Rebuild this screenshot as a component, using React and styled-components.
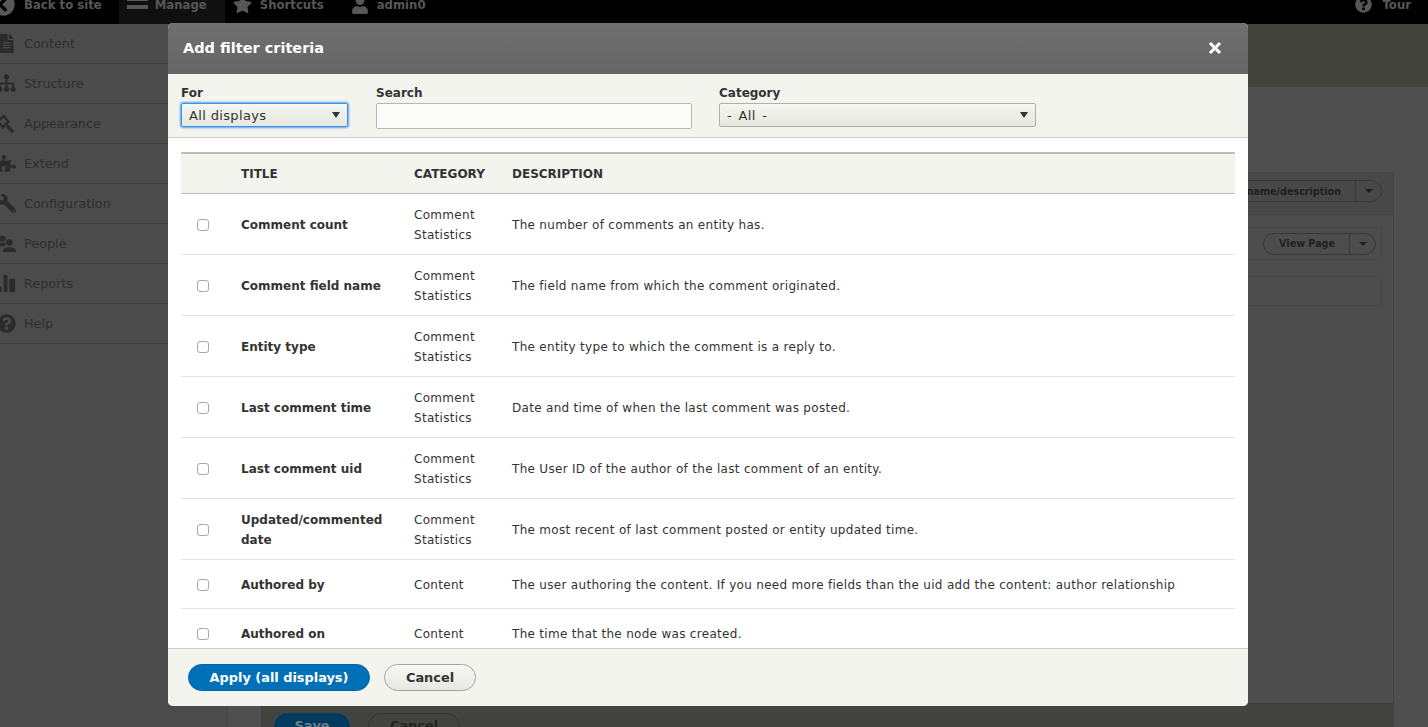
import React from "react";
import styled, { createGlobalStyle } from "styled-components";
import { FaFileAlt, FaPuzzlePiece, FaWrench, FaQuestionCircle, FaChevronCircleLeft, FaStar, FaUser } from "react-icons/fa";

const fontStack = `"DejaVu Sans", "Liberation Sans", sans-serif`;

const Global = createGlobalStyle`
  html, body { margin: 0; height: 100%; overflow: hidden; }
  body { font-family: ${fontStack}; background: #4f4f4f; }
  * { box-sizing: border-box; }
`;

const Page = styled.div`
  position: relative;
  width: 1428px;
  height: 727px;
  overflow: hidden;
  background: #4f4f4f;
`;

// ______ toolbar, scrolled partly out of the page ___________
const Toolbar = styled.div`
  height: 24px;
  background: #000;
  overflow: hidden;
`;
const ToolRow = styled.div`
  height: 39px;
  margin-top: -15px;
  margin-left: -8px;
  display: flex;
  color: #575757;
  font-size: 11.7px;
  font-weight: 700;
`;
const ToolItem = styled.div`
  display: flex;
  align-items: center;
  gap: ${(p) => p.$gap || 8}px;
  padding: 0 ${(p) => p.$right}px 0 ${(p) => p.$left}px;
  background: ${(p) => (p.$active ? "#101010" : "transparent")};
  svg { flex: none; }
`;
const ToolSpacer = styled.div`
  flex: 1;
`;

const Body = styled.div`
  display: flex;
  height: 703px;
`;
const Sidebar = styled.div`
  width: 228px;
  flex: none;
  background: #4b4b4b;
  border-right: 1px solid #444;
`;
const SideRow = styled.div`
  height: 40px;
  display: flex;
  align-items: center;
  gap: 8px;
  color: #2f2f2f;
  font-size: 12.8px;
  border-bottom: 1px solid #404040;
  svg { flex: none; width: 19px; height: 19px; margin-left: -3px; color: #2b2b2b; }
`;
const FlippedWrench = styled(FaWrench)`
  transform: scaleX(-1);
`;
const Main = styled.div`
  flex: 1;
  display: flex;
  flex-direction: column;
`;
const Header = styled.div`
  height: 63px;
  flex: none;
  background: #43443e;
`;
const Content = styled.div`
  flex: 1;
  min-height: 0;
  display: flex;
  flex-direction: column;
  padding: 85px 34px 0 33px;
`;
const Panel = styled.div`
  flex: 1;
  background: #4d4d4d;
  border: 1px solid #444;
  border-bottom-color: #3e3e3a;
`;
const PanelHead = styled.div`
  height: 42px;
  background: #484848;
  border-bottom: 1px solid #444;
  display: flex;
  align-items: center;
  justify-content: flex-end;
  padding: 0 11px 5px 0;
`;
const PanelBody = styled.div`
  display: flex;
  flex-direction: column;
  gap: 16px;
  padding: 12px 11px;
`;
const DisplayCard = styled.div`
  height: ${(p) => p.$h}px;
  border: 1px solid #484848;
  display: flex;
  align-items: center;
  justify-content: flex-end;
  padding-right: 5px;
`;
const SplitButton = styled.div`
  height: 22px;
  border: 1px solid #383838;
  border-radius: 11px;
  display: flex;
  align-items: center;
  font-size: 9.6px;
  font-weight: 700;
  color: #202020;
`;
const SplitLabel = styled.span`
  padding: 0 14px 0 15px;
`;
const SplitToggle = styled.span`
  width: 26px;
  height: 100%;
  border-left: 1px solid #383838;
  display: flex;
  align-items: center;
  justify-content: center;
  &::after {
    content: "";
    border-left: 4px solid transparent;
    border-right: 4px solid transparent;
    border-top: 4px solid #202020;
  }
`;
const Actions = styled.div`
  height: 23px;
  flex: none;
  overflow: hidden;
  background: #43433f;
  display: flex;
  gap: 18px;
  padding: 9px 0 0 13px;
`;
const PageButton = styled.div`
  flex: none;
  height: 27px;
  width: ${(p) => p.$w}px;
  border-radius: 14px;
  display: flex;
  justify-content: center;
  padding-top: 4px;
  font-size: 12.9px;
  font-weight: 700;
  background: ${(p) => (p.$primary ? "#003a5f" : "transparent")};
  color: ${(p) => (p.$primary ? "#6f7f8a" : "#222")};
  border: 1px solid ${(p) => (p.$primary ? "#003a5f" : "#333")};
`;

const Modal = styled.div`
  position: absolute;
  left: 168px;
  top: 23px;
  width: 1080px;
  height: 683px;
  background: #fff;
  border-radius: 5px;
  overflow: hidden;
  display: flex;
  flex-direction: column;
`;
const ModalTitle = styled.div`
  height: 51px;
  flex: none;
  background: linear-gradient(to bottom, #6f6f6f, #666);
  color: #fff;
  font-size: 14.5px;
  font-weight: 700;
  display: flex;
  align-items: center;
  justify-content: space-between;
  padding: 0 26px 2px 15px;
`;
const Filters = styled.div`
  flex: none;
  height: 64px;
  background: #f3f4ee;
  border-bottom: 1px solid #ccc;
  display: flex;
  padding: 12px 13px 0;
`;
const Field = styled.div`
  width: ${(p) => p.$w}px;
  margin-right: ${(p) => p.$gap}px;
  display: flex;
  flex-direction: column;
  gap: 3px;
`;
const Label = styled.label`
  font-size: 12px;
  font-weight: 700;
  line-height: 14px;
  color: #333;
`;
const Select = styled.div`
  height: 24px;
  border: 1px solid ${(p) => (p.$focus ? "#3d93e6" : "#b0b0a8")};
  border-radius: 2px;
  box-shadow: ${(p) => (p.$focus ? "0 0 2px 1px #5aa5ee" : "none")};
  background: linear-gradient(to bottom, #f6f6f2, #e7e7df);
  display: flex;
  align-items: center;
  justify-content: space-between;
  padding: 0 7px 0 7px;
  font-size: 13px;
  letter-spacing: 0.35px;
  word-spacing: ${(p) => p.$words || 0}px;
  color: #333;
`;
const Caret = styled.span`
  width: 0;
  height: 0;
  border-left: 4px solid transparent;
  border-right: 4px solid transparent;
  border-top: 6px solid #333;
`;
const Input = styled.div`
  height: 26px;
  border: 1px solid #b8b8b0;
  border-radius: 2px;
  background: #fcfcfa;
`;

const Scroller = styled.div`
  flex: 1;
  overflow: hidden;
  padding: 14px 13px 0;
`;
const Table = styled.table`
  width: 100%;
  border-collapse: collapse;
  table-layout: fixed;
  font-size: 12px;
  color: #333;
`;
const Head = styled.th`
  height: 40px;
  background: #f3f4ee;
  border-top: 2px solid #bfbfba;
  border-bottom: 1px solid #bfbfba;
  font-size: 12px;
  font-weight: 700;
  text-align: left;
  text-transform: uppercase;
  padding: 2px 0 0 0;
  width: ${(p) => p.$w}px;
`;
const Row = styled.tr`
  height: ${(p) => p.$h}px;
  border-bottom: 1px solid #e4e4de;
`;
const Cell = styled.td`
  padding: 2px 0 0;
  line-height: 20px;
  font-weight: ${(p) => (p.$bold ? 700 : 400)};
  letter-spacing: ${(p) => (p.$bold ? 0 : 0.3)}px;
`;
const CheckCell = styled.td`
  padding: 2px 0 0 16px;
`;
const Check = styled.span`
  display: block;
  width: 12px;
  height: 12px;
  border: 1px solid #a9a9a9;
  border-radius: 3px;
  background: #fff;
`;

const Footer = styled.div`
  flex: none;
  height: 58px;
  background: #f3f4ee;
  border-top: 1px solid #ccc;
  display: flex;
  align-items: center;
  gap: 14px;
  padding: 0 20px 1px;
`;
const Button = styled.div`
  height: 27px;
  width: ${(p) => p.$w}px;
  border-radius: 14px;
  display: flex;
  align-items: center;
  justify-content: center;
  font-size: 12.9px;
  font-weight: 700;
  color: ${(p) => (p.$primary ? "#fff" : "#333")};
  background: ${(p) => (p.$primary ? "#0071b8" : "linear-gradient(to bottom,#f6f6f3,#e8e8e3)")};
  border: 1px solid ${(p) => (p.$primary ? "#0065a5" : "#a6a6a0")};
`;
const CloseX = styled.svg`
  width: 14px;
  height: 14px;
`;

const BarsIcon = () => (
  <svg width="21" height="24" viewBox="0 0 21 24" fill="currentColor">
    <rect y="-4" width="21" height="4" />
    <rect y="4" width="21" height="4" />
    <rect y="12" width="21" height="4" />
  </svg>
);
const StructureIcon = () => (
  <svg viewBox="0 0 20 20" fill="currentColor">
    <circle cx="10" cy="3" r="2.7" />
    <circle cx="3" cy="16" r="2.7" />
    <circle cx="10" cy="16" r="2.7" />
    <circle cx="17" cy="16" r="2.7" />
    <path d="M10 3v13M3 16v-6h14v6" fill="none" stroke="currentColor" strokeWidth="2" />
  </svg>
);
const AppearanceIcon = () => (
  <svg viewBox="0 0 20 20" fill="none" stroke="currentColor">
    <path d="M7 2L1 8l5 6 6-6z" strokeWidth="2.4" />
    <path d="M10 12l7 7" strokeWidth="3.4" />
  </svg>
);
const PeopleIcon = () => (
  <svg viewBox="0 0 20 20" fill="currentColor">
    <circle cx="6" cy="5" r="3.2" />
    <path d="M1 13c0-3 2-4 5-4 2 0 3 .5 3 .5V13H1z" />
    <circle cx="13" cy="9" r="3.4" />
    <path d="M6 19c0-4 3-5 7-5s7 1 7 5H6z" />
  </svg>
);
const ReportsIcon = () => (
  <svg viewBox="0 0 20 20" fill="currentColor">
    <rect x="0" y="13" width="5" height="6" />
    <rect x="7" y="1" width="4" height="18" />
    <rect x="13" y="5" width="6" height="14" />
  </svg>
);

const sideItems = [
  ["Content", FaFileAlt],
  ["Structure", StructureIcon],
  ["Appearance", AppearanceIcon],
  ["Extend", FaPuzzlePiece],
  ["Configuration", FlippedWrench],
  ["People", PeopleIcon],
  ["Reports", ReportsIcon],
  ["Help", FaQuestionCircle],
];

const commentStats = ["Comment", "Statistics"];
const rows = [
  ["Comment count", commentStats, "The number of comments an entity has.", 61],
  ["Comment field name", commentStats, "The field name from which the comment originated.", 61],
  ["Entity type", commentStats, "The entity type to which the comment is a reply to.", 61],
  ["Last comment time", commentStats, "Date and time of when the last comment was posted.", 61],
  ["Last comment uid", commentStats, "The User ID of the author of the last comment of an entity.", 61],
  ["Updated/commented date", commentStats, "The most recent of last comment posted or entity updated time.", 61],
  ["Authored by", ["Content"], "The user authoring the content. If you need more fields than the uid add the content: author relationship", 49],
  ["Authored on", ["Content"], "The time that the node was created.", 49],
];

export default function App() {
  return (
    <Page>
      <Global />
      <Toolbar>
        <ToolRow>
          <ToolItem $left={0} $right={17} $gap={9}><FaChevronCircleLeft size={23} />Back to site</ToolItem>
          <ToolItem $active $left={8} $right={18} $gap={7}><BarsIcon />Manage</ToolItem>
          <ToolItem $left={8} $right={27}><FaStar size={19} />Shortcuts</ToolItem>
          <ToolItem $left={0} $right={0}><FaUser size={18} />admin0</ToolItem>
          <ToolSpacer />
          <ToolItem $left={0} $right={17} $gap={10}><FaQuestionCircle size={17} />Tour</ToolItem>
        </ToolRow>
      </Toolbar>
      <Body>
        <Sidebar>
          {sideItems.map(([label, Icon]) => (
            <SideRow key={label}><Icon />{label}</SideRow>
          ))}
        </Sidebar>
        <Main>
          <Header />
          <Content>
            <Panel>
              <PanelHead>
                <SplitButton>
                  <SplitLabel>Edit view name/description</SplitLabel>
                  <SplitToggle />
                </SplitButton>
              </PanelHead>
              <PanelBody>
                <DisplayCard $h={33}>
                  <SplitButton>
                    <SplitLabel>View Page</SplitLabel>
                    <SplitToggle />
                  </SplitButton>
                </DisplayCard>
                <DisplayCard $h={30} />
              </PanelBody>
            </Panel>
            <Actions>
              <PageButton $primary $w={76}>Save</PageButton>
              <PageButton $w={92}>Cancel</PageButton>
            </Actions>
          </Content>
        </Main>
      </Body>
      <Modal>
        <ModalTitle>
          Add filter criteria
          <CloseX viewBox="0 0 14 14"><path d="M2 2l10 10M12 2L2 12" stroke="#fff" strokeWidth="3" /></CloseX>
        </ModalTitle>
        <Filters>
          <Field $w={167} $gap={28}>
            <Label>For</Label>
            <Select $focus>All displays<Caret /></Select>
          </Field>
          <Field $w={316} $gap={27}>
            <Label>Search</Label>
            <Input />
          </Field>
          <Field $w={317} $gap={0}>
            <Label>Category</Label>
            <Select $words={2}>- All -<Caret /></Select>
          </Field>
        </Filters>
        <Scroller>
          <Table>
            <thead>
              <tr>
                <Head $w={60} />
                <Head $w={173}>Title</Head>
                <Head $w={98}>Category</Head>
                <Head>Description</Head>
              </tr>
            </thead>
            <tbody>
              {rows.map(([title, cat, desc, h]) => (
                <Row key={title} $h={h}>
                  <CheckCell><Check /></CheckCell>
                  <Cell $bold>{title}</Cell>
                  <Cell>{cat.map((c) => <div key={c}>{c}</div>)}</Cell>
                  <Cell>{desc}</Cell>
                </Row>
              ))}
            </tbody>
          </Table>
        </Scroller>
        <Footer>
          <Button $primary $w={182}>Apply (all displays)</Button>
          <Button $w={92}>Cancel</Button>
        </Footer>
      </Modal>
    </Page>
  );
}
